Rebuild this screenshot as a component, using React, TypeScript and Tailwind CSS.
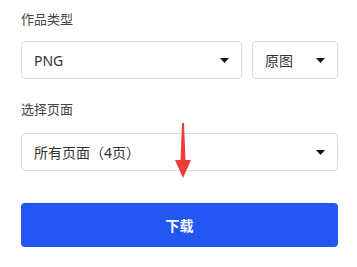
import { ReactNode } from 'react';

function Caret() {
  return (
    <svg width="9" height="5" viewBox="0 0 9 5" className="shrink-0">
      <polygon points="0,0 9,0 4.5,5" fill="#111" />
    </svg>
  );
}

function SelectBox({ children, className }: { children: ReactNode; className?: string }) {
  return (
    <div
      className={
        'flex h-[38px] items-center justify-between rounded-[4px] border border-[#dcdcdc] bg-white pl-[12px] pr-[12px] text-[14px] text-[#333] ' +
        (className ?? '')
      }
    >
      <span>{children}</span>
      <Caret />
    </div>
  );
}

export default function App() {
  return (
    <div
      className="relative h-[267px] w-[357px] bg-white px-[21px] pt-[9px] pr-[19px]"
      style={{ fontFamily: '"Noto Sans", "Noto Sans CJK SC", sans-serif' }}
    >
      {/* 作品类型 */}
      <div className="h-[20px] text-[13px] leading-[20px] text-[#444]">作品类型</div>
      <div className="mt-[12px] flex gap-[10px]">
        <SelectBox className="w-[221px]">PNG</SelectBox>
        <SelectBox className="flex-1">原图</SelectBox>
      </div>

      {/* 选择页面 */}
      <div className="mt-[20px] h-[20px] text-[13px] leading-[20px] text-[#444]">选择页面</div>
      <SelectBox className="mt-[14px]">所有页面（4页）</SelectBox>

      <button className="mt-[32px] flex h-[44px] w-full items-center justify-center rounded-[4px] bg-[#2456f4] text-[14px] font-bold text-white">
        下载
      </button>

      {/* 标注箭头 */}
      <svg
        className="pointer-events-none absolute left-[174px] top-[123px]"
        width="18"
        height="56"
        viewBox="0 0 18 56"
      >
        <polygon points="8,0 10,0 11.5,37 17,37 9,55 1,37 6.5,37" fill="#f03b3b" />
      </svg>
    </div>
  );
}
